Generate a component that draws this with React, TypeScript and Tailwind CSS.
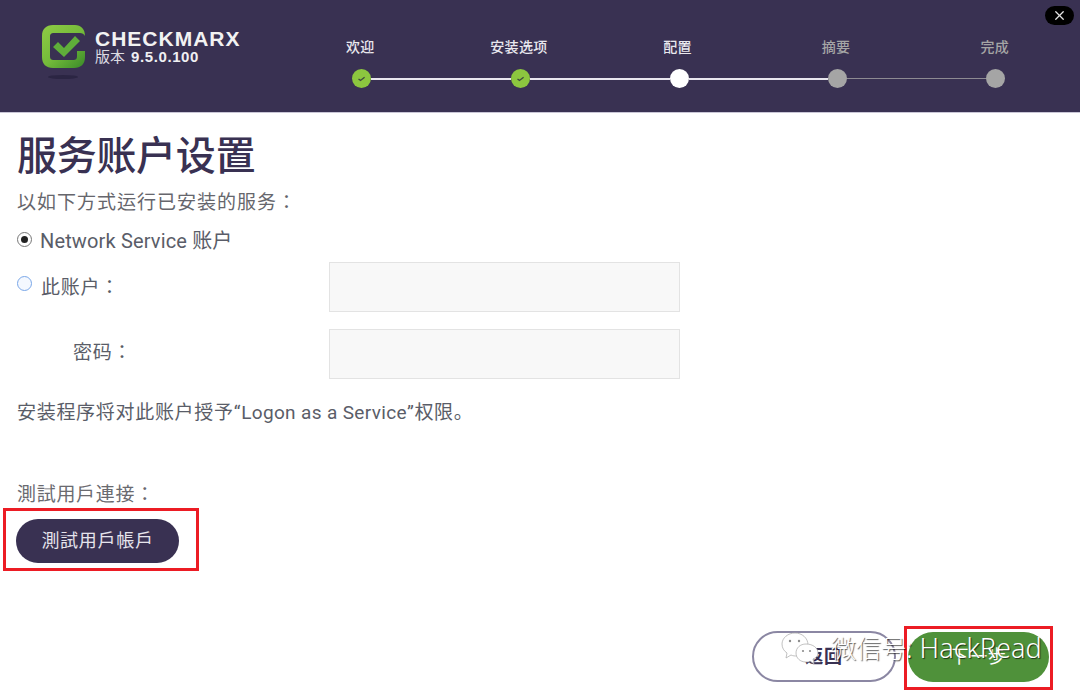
import { X } from 'lucide-react';

const cjk = "font-['Roboto','Noto_Sans_CJK_JP','Noto_Sans',sans-serif]";

const steps = [
  { label: '欢迎', state: 'done' },
  { label: '安装选项', state: 'done' },
  { label: '配置', state: 'current' },
  { label: '摘要', state: 'todo' },
  { label: '完成', state: 'todo' },
];

function Logo() {
  return (
    <svg width="46" height="62" viewBox="0 0 46 62" className="shrink-0">
      <defs>
        <linearGradient id="lg" x1="0" y1="0" x2="0.9" y2="1">
          <stop offset="0" stopColor="#8fcb45" />
          <stop offset="0.55" stopColor="#74bb3a" />
          <stop offset="1" stopColor="#3f8f2b" />
        </linearGradient>
      </defs>
      <ellipse cx="22" cy="53" rx="15" ry="2" fill="#2b2543" />
      <path
        d="M44 12 C44 5 40 1 34 1 H12 C5 1 1 5 1 12 V33 C1 40 5 44 12 44 H33 C40 44 44 40 44 33 V27 H36 V32 C36 35 35 36 32 36 H13 C10 36 9 35 9 32 V13 C9 10 10 9 13 9 H39 C41 9 43 10 44 12 Z"
        fill="url(#lg)"
      />
      <path d="M12 23 L17 18 L23 24 L34 12 L39 17 L23 33 Z" fill="#5fae3a" />
    </svg>
  );
}

function Dot({ state }: { state: string }) {
  if (state === 'done') {
    return (
      <div className="w-[19px] h-[19px] rounded-full bg-[#8cc63f] flex items-center justify-center shrink-0">
        <svg width="11" height="11" viewBox="0 0 11 11">
          <path d="M2.5 6 L4.5 7.4 L8.6 4.2" fill="none" stroke="#3f4a3f" strokeWidth="1.3" />
        </svg>
      </div>
    );
  }
  return (
    <div
      className={
        state === 'current'
          ? 'w-[19px] h-[19px] rounded-full bg-white shrink-0'
          : 'w-[19px] h-[19px] rounded-full bg-[#a5a5a5] shrink-0'
      }
    />
  );
}

function Stepper() {
  return (
    <div className="w-[793px] ml-[41px] mt-[37px]">
      <div className="grid grid-cols-5 w-[793px]">
        {steps.map(s => (
          <div
            key={s.label}
            className={
              s.state === 'todo'
                ? 'text-center text-[14px] leading-[20px] font-medium tracking-[0.3px] text-[#a5a5a5]'
                : 'text-center text-[14px] leading-[20px] font-medium tracking-[0.3px] text-[#e9e8ee]'
            }
          >
            {s.label}
          </div>
        ))}
      </div>
      <div className="flex items-center pl-[71px] mt-[12px]">
        <Dot state="done" />
        <div className="w-[140px] h-[2px] bg-[#e8e6ee]" />
        <Dot state="done" />
        <div className="w-[140px] h-[2px] bg-[#e8e6ee]" />
        <Dot state="current" />
        <div className="w-[139px] h-[2px] bg-[#e8e6ee]" />
        <Dot state="todo" />
        <div className="w-[139px] h-px bg-[#8d8a92]" />
        <Dot state="todo" />
      </div>
    </div>
  );
}

function WeChatIcon() {
  return (
    <svg width="40" height="36" viewBox="0 0 40 36" className="shrink-0">
      <path
        d="M14 1 C7 1 1 6 1 12 C1 16 3 19 6 21 L5 26 L10 23 C12 24 14 24 16 24 C22 24 27 19 27 13 C27 6 21 1 14 1 Z"
        fill="#ffffff"
        stroke="#a8a8a8"
        strokeWidth="0.7"
      />
      <path
        d="M25 12 C19 12 15 16 15 21 C15 26 19 30 25 30 C27 30 28 30 29 29 L33 32 L32 27 C35 26 37 24 37 21 C37 16 32 12 25 12 Z"
        fill="#ffffff"
        stroke="#a8a8a8"
        strokeWidth="0.7"
      />
      <circle cx="9" cy="9" r="1.2" fill="#8d8d8d" />
      <circle cx="18" cy="9" r="1.2" fill="#8d8d8d" />
      <circle cx="22" cy="19" r="1.1" fill="#8d8d8d" />
      <circle cx="29" cy="19" r="1.1" fill="#8d8d8d" />
    </svg>
  );
}

function TextBox() {
  return <div className="w-[351px] h-[50px] bg-[#f8f8f8] border border-[#e3e3e3]" />;
}

export default function App() {
  return (
    <div className={`relative w-[1080px] h-[697px] bg-white overflow-hidden ${cjk}`}>
      {/* Header */}
      <div className="h-[113px] bg-[#393152] border-b border-[#c9c6d6] flex items-start relative">
        <div className="flex items-start pl-[41px] pt-[24px] w-[240px]">
          <Logo />
          <div className="ml-[8px] pt-[5px] whitespace-nowrap">
            <div className="font-['Liberation_Sans',sans-serif] font-bold text-[21px] leading-[20px] tracking-[1px] text-[#f2f2f2]">
              CHECKMARX
            </div>
            <div className="flex items-center text-[15px] leading-[18px] -mt-px text-[#dcdbe2]">
              版本
              <span className="ml-[6px] font-['Liberation_Sans',sans-serif] font-bold text-[15px] tracking-[0.6px] text-[#efeff2]">
                9.5.0.100
              </span>
            </div>
          </div>
        </div>
        <Stepper />
        <button className="absolute right-[6px] top-[6px] w-[29px] h-[19px] rounded-full bg-black flex items-center justify-center">
          <X size={15} strokeWidth={2} className="text-[#e5e5e5]" />
        </button>
      </div>

      {/* Contenido */}
      <div className="pl-[17px] text-[19px] tracking-[0.7px] text-[#5a5d68]">
        <h1 className="text-[40px] leading-[56px] font-medium tracking-[-0.3px] text-[#393152] mt-[16px]">
          服务账户设置
        </h1>
        <p className="leading-[26px] tracking-[1px] text-[#66666c] mt-[5px]">以如下方式运行已安装的服务：</p>

        <div className="flex items-center mt-[12px] h-[26px]">
          <span className="w-[15px] h-[15px] rounded-full border border-[#777] bg-white flex items-center justify-center -mt-[4px]">
            <span className="w-[7px] h-[7px] rounded-full bg-[#222]" />
          </span>
          <span className="ml-[8px] text-[20px] leading-[26px] tracking-[0.15px] -mt-[1px]">Network Service 账户</span>
        </div>

        <div className="flex items-start mt-[8px]">
          <div className="w-[312px] flex items-center h-[50px]">
            <span className="w-[15px] h-[15px] rounded-full border border-[#7aa7e8] bg-[#f4f8ff] -mt-[8px]" />
            <span className="ml-[9px] pt-[1px] leading-[26px]">此账户：</span>
          </div>
          <TextBox />
        </div>

        <div className="flex items-start mt-[17px]">
          <div className="w-[312px] pl-[56px] pt-[11px] leading-[26px]">密码：</div>
          <TextBox />
        </div>

        <p className="leading-[26px] mt-[21px]">
          安装程序将对此账户授予“<span className="tracking-[0.35px]">Logon as a Service</span>”权限。
        </p>

        <p className="leading-[26px] text-[#6a6a70] mt-[56px]">測試用戶連接：</p>

        <div className="-ml-[14px] w-[196px] h-[63px] border-[3px] border-[#ec1c24] pl-[10px] pt-[7px]">
          <button className="w-[163px] h-[44px] mt-[1px] rounded-full bg-[#393152] text-[#e6e4ec] text-[18px] leading-none">
            測試用戶帳戶
          </button>
        </div>

        <div className="flex items-start justify-end mt-[55px] pr-[27px]">
          <button className="w-[144px] h-[51px] mt-[5px] mr-[8px] rounded-full bg-white border-2 border-[#8b87a3] text-[#393152] text-[18px] leading-none font-bold">
            返回
          </button>
          <div className="w-[149px] h-[64px] border-[3px] border-[#ec1c24] pl-[1px] pt-[3px]">
            <button className="w-[141px] h-[50px] rounded-full bg-[#4f913a] text-white text-[18px] leading-none">
              下一步
            </button>
          </div>
        </div>
      </div>

      {/* Marca de agua */}
      <div className="absolute left-[781px] top-[630px] flex items-center">
        <WeChatIcon />
        <span className="ml-[10px] -mt-[2px] text-[25px] leading-[40px] font-light text-white whitespace-nowrap [text-shadow:1px_1px_1px_rgba(0,0,0,0.65)]">
          微信号
          <span className="font-['Noto_Sans',sans-serif] text-[27px]">: HackRead</span>
        </span>
      </div>
    </div>
  );
}
